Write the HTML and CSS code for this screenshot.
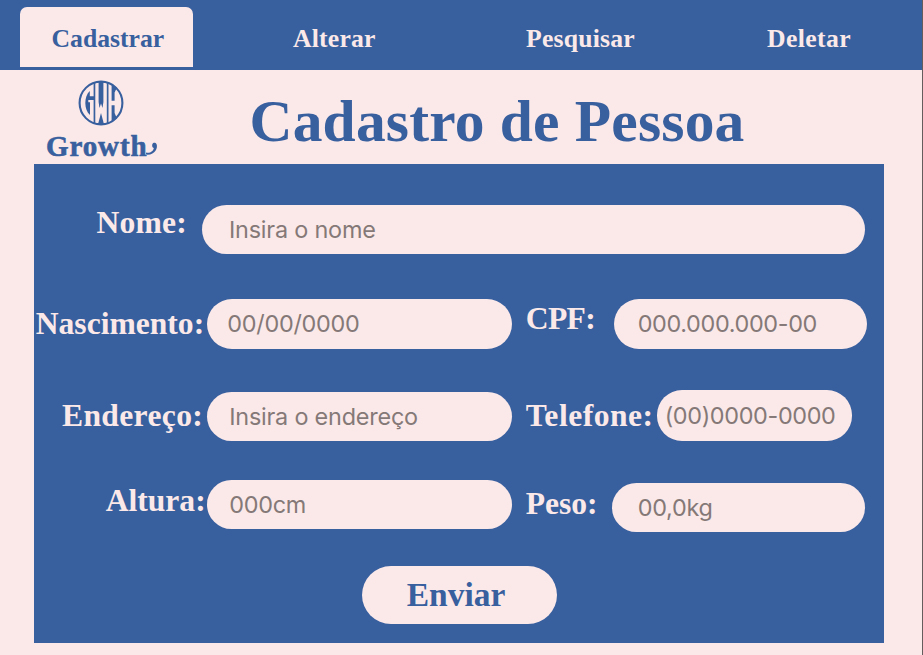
FILE: index.html
```html
<!DOCTYPE html>
<html lang="pt-BR">
<head>
<meta charset="utf-8">
<title>Cadastro de Pessoa</title>
<link rel="stylesheet" href="styles.css">
</head>
<body>
<nav class="tabs">
  <a class="tab tab-active">Cadastrar</a>
  <a class="tab tab-edit">Alterar</a>
  <a class="tab tab-search">Pesquisar</a>
  <a class="tab tab-delete">Deletar</a>
</nav>
<header class="header">
  <div class="brand">
    <svg class="emblem" viewBox="0 0 46 46" aria-hidden="true">
      <defs><clipPath id="disc"><circle cx="23" cy="23" r="22"/></clipPath></defs>
      <circle class="ring" cx="23" cy="23" r="21.4"/>
      <g class="cuts" clip-path="url(#disc)">
        <path d="M15.6 2H17.3V44H15.6ZM28.8 2H30.5V44H28.8Z"/>
        <path d="M20.6 1H25.4V22L24.5 28L23 23.5L21.5 28L20.6 22Z"/>
        <path d="M23 33L26.2 45H19.8Z"/>
        <path d="M11.8 11V16.2H16V20H10.3V22.2H12V35C5.8 30 5.8 16 11.8 11Z"/>
        <path d="M33.6 3L39 7.5L36.6 12.5V20.7H33.6Z"/>
        <path d="M33.6 25.2H36.6V33L39 38.5L33.6 43Z"/>
      </g>
    </svg>
    <div class="wordmark">Growth<svg class="tail" viewBox="0 0 12 16" aria-hidden="true"><path d="M0 12.6C4 13.6 7.5 11 7.8 8C6.2 7.5 5.8 5.5 6.4 4C7.2 2.3 9.5 2.2 10.5 4C12.3 8 8.8 15.6 0 14.6Z"/></svg></div>
  </div>
  <h1 class="title">Cadastro de Pessoa</h1>
</header>
<form class="form">
  <div class="row row-name">
    <label class="label" for="nome">Nome:</label>
    <input class="input" id="nome" placeholder="Insira o nome">
  </div>
  <div class="row row-birth">
    <label class="label" for="nascimento">Nascimento:</label>
    <input class="input" id="nascimento" placeholder="00/00/0000">
    <label class="label second" for="cpf">CPF:</label>
    <input class="input cpf" id="cpf" placeholder="000.000.000-00">
  </div>
  <div class="row row-address">
    <label class="label" for="endereco">Endereço:</label>
    <input class="input" id="endereco" placeholder="Insira o endereço">
    <label class="label second" for="telefone">Telefone:</label>
    <input class="input phone" id="telefone" placeholder="(00)0000-0000">
  </div>
  <div class="row row-height">
    <label class="label" for="altura">Altura:</label>
    <input class="input" id="altura" placeholder="000cm">
    <label class="label second" for="peso">Peso:</label>
    <input class="input weight" id="peso" placeholder="00,0kg">
  </div>
  <button class="submit" type="button">Enviar</button>
</form>
</body>
</html>
```
FILE: styles.css
```css
:root {
  --blue: #385f9e;
  --pink: #fbe9e9;
}
* { box-sizing: border-box; }
body {
  margin: 0;
  height: 655px;
  overflow: hidden;
  background: var(--pink);
  border-right: 1px solid #655c5e;
  color: var(--blue);
  font-family: "Liberation Serif", serif;
  font-weight: 700;
}
.tabs {
  display: flex;
  height: 70.4px;
  margin-right: -1px;
  padding: 7.4px 0 3.5px 19.5px;
  background: var(--blue);
  border-right: 1px solid #263650;
}
.tab {
  padding-top: 16px;
  color: var(--pink);
  font-size: 25.7px;
  line-height: 32px;
  letter-spacing: 0.2px;
  white-space: nowrap;
}
.tab-active {
  width: 173.5px;
  padding-left: 32px;
  background: var(--pink);
  border-radius: 7px 7px 0 0;
  color: var(--blue);
  letter-spacing: 0;
}
.tab-edit { width: 233px; padding-left: 100px; }
.tab-search { width: 241px; padding-left: 100px; }
.tab-delete { padding-left: 100px; letter-spacing: 0.4px; }
.header {
  display: flex;
  height: 93.6px;
}
.brand {
  width: 249.5px;
  padding: 9.6px 0 0 46px;
}
.emblem {
  display: block;
  width: 46px;
  height: 46px;
  margin-left: 32px;
}
.ring {
  fill: var(--pink);
  stroke: var(--blue);
  stroke-width: 2.1;
}
.cuts { fill: var(--blue); }
.wordmark {
  display: flex;
  margin-top: 3.4px;
  font-size: 29px;
  line-height: 34px;
  letter-spacing: 0.9px;
  -webkit-text-stroke: 0.6px var(--blue);
}
.tail {
  width: 14px;
  height: 16px;
  margin: 11px 0 0 -3px;
  fill: var(--blue);
}
.title {
  margin: 17px 0 0;
  font-size: 59.5px;
  line-height: 68px;
  letter-spacing: 0.2px;
  white-space: nowrap;
}
.form {
  display: flex;
  flex-direction: column;
  width: 850px;
  height: 479px;
  margin-left: 34px;
  padding-top: 41px;
  background: var(--blue);
}
.row {
  display: flex;
  align-items: flex-start;
}
.row-name { height: 94px; }
.row-birth { height: 91px; }
.row-address { height: 90.5px; }
.row-height { height: 85.5px; }
.label {
  flex: none;
  width: 173.2px;
  padding-right: 3px;
  color: var(--pink);
  font-size: 31.6px;
  line-height: 36px;
  text-align: right;
  white-space: nowrap;
}
.row-name .label { width: 168px; padding-right: 15px; letter-spacing: 0.2px; }
.row-birth .label { margin-top: 7px; }
.row-address .label { margin-top: 8px; padding-right: 4px; letter-spacing: 0.35px; }
.row-height .label { margin-top: 3px; padding-right: 1.5px; }
.label.second {
  width: 88px;
  margin-left: 13.5px;
  text-align: left;
}
.row-birth .second { margin-top: 2px; letter-spacing: -0.6px; }
.row-address .second { width: 131px; letter-spacing: 0.5px; }
.row-height .second { width: 81px; margin-top: 6px; }
.input {
  flex: none;
  width: 305px;
  height: 49px;
  padding: 0 22px;
  border: 0;
  border-radius: 25px;
  background: var(--pink);
  font: 400 23.4px Inter, sans-serif;
  letter-spacing: -0.25px;
}
.input::placeholder {
  color: #857978;
  opacity: 1;
}
.row-name .input { width: 663px; padding-left: 27px; letter-spacing: -0.2px; }
.row-birth .input { height: 50px; padding-left: 20px; }
.row-address .input { margin-top: 2px; letter-spacing: -0.2px; }
.row-birth .cpf { width: 253px; padding-left: 24px; letter-spacing: -0.35px; }
.row-address .phone { width: 195px; height: 51px; margin-top: 0; padding: 0 8px; letter-spacing: -0.35px; }
.row-height .weight { width: 253px; margin: 2.5px 0 0 5px; padding-left: 26px; }
.submit {
  width: 195px;
  height: 58px;
  margin-left: 327.5px;
  padding: 0 6px 0 0;
  border: 0;
  border-radius: 29px;
  background: var(--pink);
  color: var(--blue);
  font: 700 33.5px/58px "Liberation Serif", serif;
}
```
